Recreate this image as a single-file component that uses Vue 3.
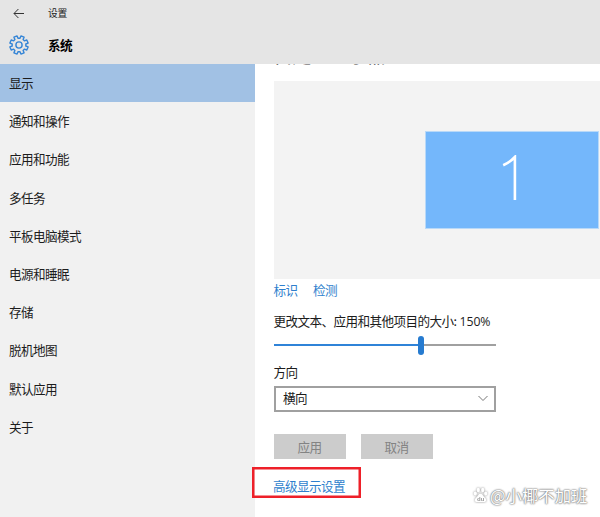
<script setup>
const items = ['显示', '通知和操作', '应用和功能', '多任务', '平板电脑模式', '电源和睡眠', '存储', '脱机地图', '默认应用', '关于']
const scale = 66.2

const point = (r, deg) => {
  const a = (deg * Math.PI) / 180
  return `${(10 + r * Math.sin(a)).toFixed(2)} ${(10 - r * Math.cos(a)).toFixed(2)}`
}
const gear = 'M' + Array.from({ length: 8 }, (_, i) => {
  const c = i * 45 + 22.5
  return [point(6.9, c - 14), point(9.3, c - 10.5), point(9.3, c + 10.5), point(6.9, c + 14)].join('L')
}).join('L') + 'Z'
</script>

<template>
  <div class="window">
    <header class="top">
      <div class="titlebar">
        <svg class="back" width="12" height="11" viewBox="0 0 12 11">
          <path d="M11 5.5H1M5.4 1L1 5.5L5.4 10" />
        </svg>
        <span class="caption">设置</span>
      </div>
      <div class="heading">
        <svg class="gear" width="20" height="20" viewBox="0 0 20 20">
          <path :d="gear" />
          <circle cx="10" cy="10" r="3.1" />
        </svg>
        <h1>系统</h1>
      </div>
    </header>
    <div class="body">
      <nav class="side">
        <a v-for="(item, i) in items" :key="item" class="item" :class="{ active: i === 0 }">{{ item }}</a>
      </nav>
      <main class="content">
        <div class="clip"><h2>自定义显示器</h2></div>
        <section class="preview">
          <div class="monitor">
            <svg width="16" height="46" viewBox="0 0 16 46">
              <path d="M1.2 10.2C5.5 8.3 9.5 5.7 12.9 2V45" />
            </svg>
          </div>
        </section>
        <div class="links"><a>标识</a><a>检测</a></div>
        <div class="label size">更改文本、应用和其他项目的大小: <span>150%</span></div>
        <div class="slider">
          <div class="fill" :style="{ width: scale + '%' }"></div>
          <div class="thumb"></div>
          <div class="rest"></div>
        </div>
        <div class="label direction">方向</div>
        <div class="select">
          <span>横向</span>
          <svg width="10" height="7" viewBox="0 0 10 7"><path d="M.5 1L5 5.5L9.5 1" /></svg>
        </div>
        <div class="buttons"><button disabled>应用</button><button disabled>取消</button></div>
        <div class="advanced"><a>高级显示设置</a></div>
      </main>
    </div>
    <div class="watermark">
      <svg width="15" height="16" viewBox="0 0 15 16">
        <ellipse cx="2.3" cy="6.5" rx="1.6" ry="2" />
        <ellipse cx="5.3" cy="3" rx="1.6" ry="2.2" />
        <ellipse cx="9.7" cy="3" rx="1.6" ry="2.2" />
        <ellipse cx="12.7" cy="6.5" rx="1.6" ry="2" />
        <path d="M7.5 6.8C5.5 6.8 5 9 3.3 10.4C.5 12.8 2 15.4 4.6 15.1H10.4C13 15.4 14.5 12.8 11.7 10.4C10 9 9.5 6.8 7.5 6.8Z" />
        <text x="4" y="13.8">du</text>
      </svg>
      <span>@小椰不加班</span>
    </div>
  </div>
</template>

<style>
body { margin: 0; overflow: hidden; }
</style>

<style scoped>
.window {
  position: relative;
  width: 600px;
  height: 517px;
  display: flex;
  flex-direction: column;
  overflow: hidden;
  background: #fff;
  color: #1c1c1c;
  font: 12.6px/18px "Noto Sans CJK SC", sans-serif;
  letter-spacing: -0.6px;
}
svg { fill: none; flex: none; }
.top { height: 64px; flex: none; background: #e5e5e5; }
.titlebar { display: flex; align-items: center; height: 26px; padding-left: 13px; }
.back { stroke: #333; stroke-width: 1; }
.caption { margin-left: 23px; font-size: 9.8px; letter-spacing: -0.2px; }
.heading { display: flex; align-items: center; height: 38px; padding-left: 9px; }
.gear { stroke: #3585d6; stroke-width: 1.4; stroke-linejoin: round; }
h1 { margin: 0 0 0 19px; font-size: 12.6px; line-height: 18px; font-weight: 700; color: #000; }
.body { display: flex; flex: 1; min-height: 0; }
.side { width: 254.5px; flex: none; background: #f1f1f1; }
.item { display: flex; align-items: center; box-sizing: border-box; height: 38.2px; padding: 0 0 0 9px; }
.active { background: #a1c1e4; }
.content { flex: 1; min-width: 0; padding-left: 19px; }
.clip { height: 17px; overflow: hidden; }
h2 { margin: -19px 0 0; font-size: 19.2px; line-height: 20px; letter-spacing: -0.5px; font-weight: 400; color: #444; white-space: nowrap; }
.preview { height: 198px; background: #f3f3f3; display: flex; padding: 50px 0 0 151px; box-sizing: border-box; }
.monitor { box-sizing: border-box; width: 174px; height: 98px; border: 1px solid #b9d9f8; background: #74b7fb; padding: 23px 0 0 76px; }
.monitor svg { display: block; stroke: #fff; stroke-width: 2.6; }
.links { display: flex; gap: 15.5px; margin-top: 2px; color: #2f7fcd; }
.size { margin-top: 13px; white-space: nowrap; }
.size span { margin-left: 1px; font-family: "Open Sans", sans-serif; font-size: 12.3px; letter-spacing: -0.1px; }
.slider { display: flex; align-items: center; width: 222.5px; height: 20px; margin-top: 4px; }
.fill { height: 2px; background: #2f83d8; flex: none; box-sizing: border-box; margin-right: -3px; }
.thumb { width: 6px; height: 19px; border-radius: 3px; background: #267bd0; z-index: 1; }
.rest { flex: 1; height: 2px; background: #a0a0a0; }
.direction { margin-top: 8px; }
.select {
  display: flex; align-items: center; justify-content: space-between; box-sizing: border-box;
  width: 222.5px; height: 26px; margin-top: 5px; padding: 0 6px 2px 7.5px; border: 2px solid #a0a0a0;
}
.select svg { stroke: #777; stroke-width: 1; }
.buttons { display: flex; gap: 15px; margin-top: 22px; }
button { width: 72px; height: 25px; padding: 0; border: 0; background: #ccc; color: #838383; font: inherit; letter-spacing: inherit; }
.advanced {
  box-sizing: border-box; width: 109px; height: 31px; margin: 8px 0 0 -21.5px; padding: 8px 0 0 19px;
  border: 2px solid #ee2029; color: #2f7fcd; box-shadow: inset 0 0 0 .5px #ee2029;
}
.watermark {
  position: absolute; left: 473px; top: 486px; display: flex; align-items: center; gap: 2px;
  height: 18px; color: #fff; font-size: 16.4px; letter-spacing: 0; white-space: nowrap;
  text-shadow: 0 0 1px #777, 0 0 2px #888, 0 0 2px #999;
}
.watermark svg { fill: #fff; filter: drop-shadow(0 0 1px #888); }
.watermark text { font: 700 6px "Liberation Sans", sans-serif; fill: #999; letter-spacing: 0; text-shadow: none; }
</style>
